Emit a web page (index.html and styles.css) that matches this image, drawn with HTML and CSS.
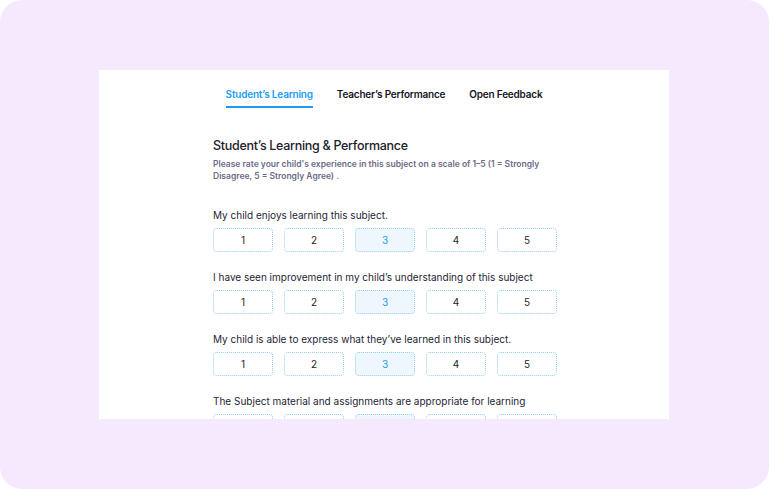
FILE: index.html
```html
<!DOCTYPE html>
<html lang="en">
<head>
<meta charset="utf-8">
<title>Student Feedback</title>
<link rel="stylesheet" href="styles.css">
</head>
<body>
<div class="frame">
  <div class="card">
    <nav class="tabs">
      <span class="tab active">Student’s Learning</span>
      <span class="tab">Teacher’s Performance</span>
      <span class="tab">Open Feedback</span>
    </nav>
    <section class="content">
      <h1 class="title">Student’s Learning &amp; Performance</h1>
      <p class="subtitle">Please rate your child's experience in this subject on a scale of 1–5 (1 = Strongly Disagree, 5 = Strongly Agree) .</p>

      <div class="question">
        <p class="label">My child enjoys learning this subject.</p>
        <div class="scale">
          <span class="opt">1</span><span class="opt">2</span><span class="opt selected">3</span><span class="opt">4</span><span class="opt">5</span>
        </div>
      </div>
      <div class="question">
        <p class="label">I have seen improvement in my child’s understanding of this subject</p>
        <div class="scale">
          <span class="opt">1</span><span class="opt">2</span><span class="opt selected">3</span><span class="opt">4</span><span class="opt">5</span>
        </div>
      </div>
      <div class="question">
        <p class="label">My child is able to express what they’ve learned in this subject.</p>
        <div class="scale">
          <span class="opt">1</span><span class="opt">2</span><span class="opt selected">3</span><span class="opt">4</span><span class="opt">5</span>
        </div>
      </div>
      <div class="question">
        <p class="label">The Subject material and assignments are appropriate for learning</p>
        <div class="scale">
          <span class="opt">1</span><span class="opt">2</span><span class="opt selected">3</span><span class="opt">4</span><span class="opt">5</span>
        </div>
      </div>
    </section>
  </div>
</div>
</body>
</html>
```
FILE: styles.css
```css
* { box-sizing: border-box; }
html, body { margin: 0; padding: 0; background: #ffffff; }
body { font-family: "Inter", "Noto Sans", sans-serif; color: #1f1f2e; }

.frame {
  width: 769px;
  height: 489px;
  background: #f5e9fd;
  border-radius: 22px;
  padding: 70px 100px 70px 99px;
}

.card {
  width: 570px;
  height: 349px;
  background: #ffffff;
  overflow: hidden;
}

.tabs {
  display: flex;
  justify-content: center;
  gap: 24px;
  padding-top: 17px;
}
.tab {
  font-size: 10px;
  font-weight: 600;
  letter-spacing: -0.2px;
  line-height: 14px;
  color: #15151f;
  padding-bottom: 5px;
  border-bottom: 2px solid transparent;
}
.tab.active {
  color: #1c9cf2;
  border-bottom-color: #1c9cf2;
}

.content {
  padding: 0 112px 0 114px;
}

.title {
  margin: 29px 0 0;
  font-size: 12.5px;
  font-weight: 500;
  letter-spacing: -0.3px;
  line-height: 18px;
  color: #1c1c2a;
}
.subtitle {
  margin: 3px 0 0;
  font-size: 8.5px;
  font-weight: 600;
  line-height: 12px;
  color: #6c6a86;
}

.question { margin-top: 26px; }
.question + .question { margin-top: 18px; }

.label {
  margin: 0;
  font-size: 10px;
  line-height: 14px;
  color: #252535;
}

.scale {
  display: flex;
  gap: 11px;
  margin-top: 6px;
}
.opt {
  flex: 0 0 60px;
  height: 24px;
  display: flex;
  align-items: center;
  justify-content: center;
  font-size: 10px;
  color: #1f1f2e;
  border: 1px dotted #92cff6;
  border-radius: 4px;
  background: #ffffff;
}
.opt.selected {
  background: #eff7fe;
  color: #1c9cf2;
}
```
